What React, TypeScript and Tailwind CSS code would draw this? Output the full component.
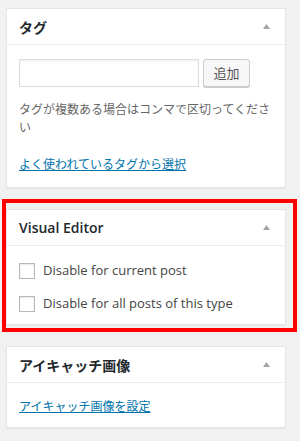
import type { ReactNode } from "react";

const Arrow = () => (
  <svg width="7" height="5" viewBox="0 0 7 5" className="block">
    <polygon points="0,5 3.5,0 7,5" fill="#a0a5aa" />
  </svg>
);

const Postbox = ({ title, jp, children }: { title: string; jp?: boolean; children: ReactNode }) => (
  <div className="w-[280px] bg-white border border-[#e5e5e5] shadow-[0_1px_1px_rgba(0,0,0,0.04)]">
    <div className="h-[36px] flex items-center justify-between pl-[12px] pr-[15px] border-b border-[#eeeeee]">
      <h2
        className={`text-[14px] text-[#23282d] leading-none ${
          jp ? "font-bold font-['Noto_Sans_CJK_JP',sans-serif]" : "font-semibold font-['Open_Sans',sans-serif]"
        }`}
      >
        {title}
      </h2>
      <Arrow />
    </div>
    {children}
  </div>
);

const Checkbox = ({ label }: { label: string }) => (
  <label className="h-[33px] flex items-center gap-[8px]">
    <span className="w-[16px] h-[16px] border border-[#b4b9be] bg-white shadow-[inset_0_1px_2px_rgba(0,0,0,0.1)]" />
    <span className="text-[13px] text-[#444444] font-['Open_Sans',sans-serif]">{label}</span>
  </label>
);

export default function App() {
  return (
    <div className="min-h-screen bg-[#f1f1f1] pt-[8px] pl-[6px] font-['Noto_Sans_CJK_JP',sans-serif]">
      <Postbox title="タグ" jp>
        <div className="px-[12px] pt-[14px] pb-[14px]">
          <div className="flex gap-[4px]">
            <div className="w-[180px] h-[28px] border border-[#dddddd] bg-white shadow-[inset_0_1px_2px_rgba(0,0,0,0.07)]" />
            <button className="w-[47px] h-[28px] border border-[#cccccc] rounded-[3px] bg-[#f7f7f7] shadow-[0_1px_0_#cccccc] text-[13px] text-[#555555]">
              追加
            </button>
          </div>
          <p className="mt-[13px] text-[12px] leading-[18px] text-[#666666]">
            タグが複数ある場合はコンマで区切ってください
          </p>
          <a className="block mt-[19px] text-[12px] leading-[18px] text-[#0073aa] underline">
            よく使われているタグから選択
          </a>
        </div>
      </Postbox>

      <div className="mt-[11px] -ml-[4px] w-[295px] border-4 border-[#ff0000] pt-[6px] pb-[3px]">
        <Postbox title="Visual Editor">
          <div className="px-[12px] pt-[8px] pb-[4px]">
            <Checkbox label="Disable for current post" />
            <Checkbox label="Disable for all posts of this type" />
          </div>
        </Postbox>
      </div>

      <div className="mt-[14px]">
        <Postbox title="アイキャッチ画像" jp>
          <div className="px-[12px] pt-[14px] pb-[12px]">
            <a className="block text-[12px] leading-[18px] text-[#0073aa] underline">
              アイキャッチ画像を設定
            </a>
          </div>
        </Postbox>
      </div>
    </div>
  );
}
